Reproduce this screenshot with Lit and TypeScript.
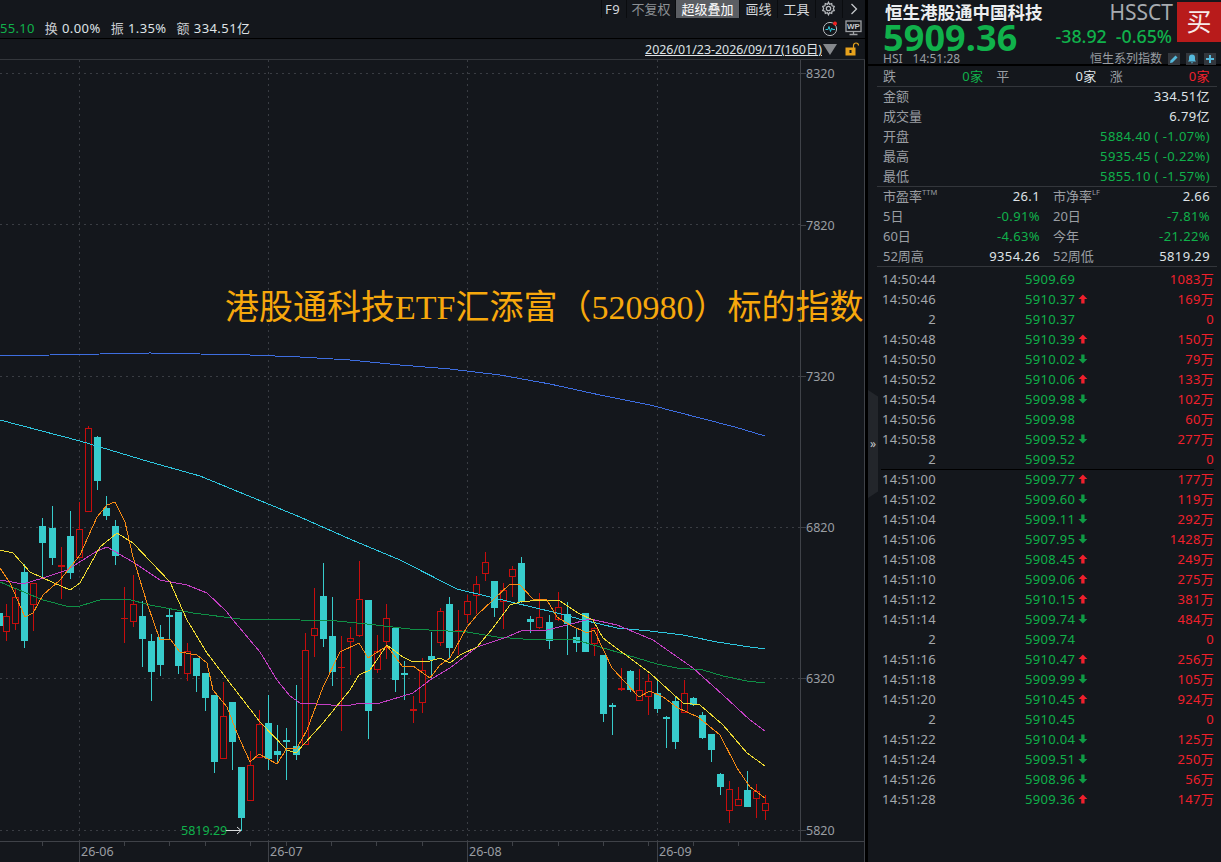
import { LitElement, html, css, svg } from "lit";
import { customElement } from "lit/decorators.js";

type C = [number, number, number, number, number, number];
// x, high, bodyTop, bodyBottom, low, rising(1)/falling(0)
const CANDLES: C[] = [
  [-1, 605, 613, 626, 640, 0], [6, 604, 616, 631, 641, 1], [15, 588, 597, 623, 630, 1], [24, 564, 572, 641, 648, 0],
  [33, 583, 583, 604, 631, 1], [42, 518, 526, 543, 577, 0], [52, 506, 528, 558, 565, 0], [61, 547, 565, 567, 599, 1],
  [70, 511, 536, 573, 579, 0], [79, 502, 529, 557, 557, 1], [88, 426, 428, 511, 511, 1], [97, 436, 437, 481, 490, 0],
  [106, 496, 508, 516, 520, 0], [115, 520, 526, 556, 565, 0], [124, 587, 618, 618, 643, 1], [133, 575, 604, 621, 627, 1],
  [142, 601, 616, 639, 667, 0], [151, 634, 641, 672, 701, 0], [160, 625, 637, 665, 676, 0], [169, 608, 615, 617, 639, 0],
  [178, 612, 612, 666, 674, 0], [187, 643, 651, 673, 681, 1], [196, 658, 658, 676, 692, 0], [205, 673, 673, 698, 711, 0],
  [214, 695, 695, 762, 773, 0], [223, 682, 716, 758, 758, 1], [232, 702, 702, 742, 770, 0], [241, 767, 767, 818, 831, 0],
  [250, 751, 765, 800, 800, 1], [259, 710, 724, 757, 758, 1], [268, 695, 723, 759, 770, 0], [277, 725, 751, 755, 762, 0],
  [286, 728, 740, 741, 780, 0], [296, 685, 746, 755, 760, 0], [305, 633, 650, 744, 744, 1], [314, 588, 628, 635, 657, 1],
  [323, 563, 596, 639, 647, 0], [332, 597, 636, 672, 686, 0], [341, 636, 667, 667, 731, 1], [350, 627, 638, 641, 675, 1],
  [359, 561, 599, 635, 637, 1], [368, 600, 600, 711, 739, 0], [377, 635, 651, 669, 673, 1], [386, 604, 618, 641, 659, 1],
  [395, 628, 628, 680, 692, 0], [404, 661, 673, 673, 700, 0], [413, 696, 709, 711, 723, 1], [422, 658, 670, 702, 713, 1],
  [431, 632, 656, 660, 680, 0], [440, 608, 611, 642, 646, 1], [449, 597, 604, 648, 658, 0], [458, 610, 630, 630, 655, 1],
  [467, 595, 601, 614, 623, 1], [476, 576, 584, 595, 614, 1], [485, 552, 562, 573, 581, 1], [494, 581, 581, 608, 617, 0],
  [503, 583, 590, 601, 629, 1], [512, 566, 569, 576, 597, 1], [521, 557, 563, 602, 603, 0], [530, 616, 619, 622, 633, 0],
  [539, 593, 617, 627, 629, 1], [549, 615, 622, 641, 649, 0], [558, 592, 607, 619, 621, 1], [567, 602, 614, 624, 655, 0],
  [576, 629, 637, 643, 652, 0], [585, 613, 613, 652, 652, 0], [594, 627, 628, 643, 656, 1], [603, 655, 655, 714, 722, 0],
  [612, 703, 705, 705, 735, 0], [621, 668, 688, 690, 691, 1], [630, 670, 671, 690, 692, 0], [639, 669, 690, 700, 700, 1],
  [648, 674, 681, 696, 715, 1], [657, 680, 693, 709, 713, 0], [666, 716, 717, 717, 748, 0], [675, 697, 701, 742, 749, 0],
  [684, 680, 693, 712, 712, 1], [693, 697, 698, 705, 706, 0], [702, 712, 715, 738, 739, 0], [711, 734, 734, 750, 762, 0],
  [720, 773, 774, 787, 795, 0], [729, 781, 789, 810, 823, 1], [738, 787, 799, 805, 805, 1], [747, 771, 790, 807, 807, 0],
  [756, 784, 791, 798, 818, 1], [765, 795, 803, 810, 820, 1],
];

const LINES: { c: string; p: string }[] = [
  { c: "#3e6ee0", p: "0,356 50,355 100,354 150,353 200,354 250,355 300,357 350,360 400,365 450,369 500,375 550,384 600,395 650,405 700,418 735,427 765,436" },
  { c: "#2ec6de", p: "0,420 80,441 150,462 200,476 300,517 352,540 400,560 457,589 490,597 557,613 583,620 617,628 650,631 683,635 717,642 750,647 765,649" },
  { c: "#0f8f45", p: "0,582 43,600 70,607 80,606 103,599 127,599 150,605 193,613 240,619 273,619 300,620 337,621 367,624 410,629 467,632 497,637 523,639 550,640 573,639 600,647 627,655 657,664 677,668 703,670 723,676 747,681 765,683" },
  { c: "#c43fc4", p: "0,580 23,584 43,578 67,570 97,551 107,547 133,562 160,580 187,585 207,593 227,612 233,620 260,652 277,680 290,696 300,703 347,706 360,703 380,703 413,693 430,680 450,668 477,647 507,637 523,630 543,631 567,625 590,619 617,625 653,640 693,668 723,695 750,720 765,731" },
  { c: "#f0dc32", p: "0,550 13,553 30,572 43,578 70,590 80,583 100,547 117,533 133,543 170,582 187,620 207,653 233,687 260,722 287,750 296,753 323,723 350,690 359,675 370,670 387,645 403,657 413,662 430,661 440,658 450,663 460,655 477,647 493,628 510,605 520,602 540,600 560,601 578,613 593,620 603,638 623,653 650,673 683,703 700,705 723,725 747,753 765,766" },
  { c: "#f58a14", p: "0,568 10,583 25,617 33,613 43,595 60,580 80,555 97,517 107,505 115,502 125,522 133,557 143,590 147,603 160,640 170,639 180,652 197,655 207,663 213,690 227,707 237,733 250,762 259,754 277,764 287,748 297,748 307,730 323,687 340,652 359,643 368,658 387,646 403,667 413,666 430,678 440,665 450,658 467,627 477,615 493,600 510,584 520,585 533,599 547,600 557,617 570,625 587,633 594,630 612,668 639,697 650,691 663,697 678,708 698,717 720,735 737,768 750,787 765,798" },
];

const H_GRID = [73, 224, 376, 527, 678, 830];
const V_GRID = [79, 268, 467, 657];
const PRICES: [string, number][] = [["8320", 73], ["7820", 225], ["7320", 376], ["6820", 527], ["6320", 678], ["5820", 830]];
const TICKS = [42, 124, 169, 205, 250, 286, 331, 376, 422, 512, 558, 603, 648, 693, 738];
const MONTHS: [string, number][] = [["26-06", 79], ["26-07", 268], ["26-08", 467], ["26-09", 657]];

type Row = [string, string, "" | "u" | "d", string];
const ROWS: Row[] = [
  ["14:50:44", "5909.69", "", "1083万"], ["14:50:46", "5910.37", "u", "169万"], ["2", "5910.37", "", "0"],
  ["14:50:48", "5910.39", "u", "150万"], ["14:50:50", "5910.02", "d", "79万"], ["14:50:52", "5910.06", "u", "133万"],
  ["14:50:54", "5909.98", "d", "102万"], ["14:50:56", "5909.98", "", "60万"], ["14:50:58", "5909.52", "d", "277万"],
  ["2", "5909.52", "", "0"],
  ["14:51:00", "5909.77", "u", "177万"], ["14:51:02", "5909.60", "d", "119万"], ["14:51:04", "5909.11", "d", "292万"],
  ["14:51:06", "5907.95", "d", "1428万"], ["14:51:08", "5908.45", "u", "249万"], ["14:51:10", "5909.06", "u", "275万"],
  ["14:51:12", "5910.15", "u", "381万"], ["14:51:14", "5909.74", "d", "484万"], ["2", "5909.74", "", "0"],
  ["14:51:16", "5910.47", "u", "256万"], ["14:51:18", "5909.99", "d", "105万"], ["14:51:20", "5910.45", "u", "924万"],
  ["2", "5910.45", "", "0"], ["14:51:22", "5910.04", "d", "125万"], ["14:51:24", "5909.51", "d", "250万"],
  ["14:51:26", "5908.96", "d", "56万"], ["14:51:28", "5909.36", "u", "147万"],
];

@customElement("app-root")
export class AppRoot extends LitElement {
  static styles = css`
    :host {
      display: flex;
      width: 1221px;
      height: 862px;
      overflow: hidden;
      background: #14171c;
      color: #dfe3e6;
      font-family: "Noto Sans", "Noto Sans CJK SC", sans-serif;
      font-size: 13px;
    }
    .left { width: 865px; flex: none; display: flex; flex-direction: column; }
    .bar { height: 18px; display: flex; justify-content: flex-end; align-items: center; }
    .tool { height: 18px; padding-bottom: 1px; display: flex; align-items: center; justify-content: center; color: #d5d8db; white-space: nowrap; border-left: 1px solid #0a0c0f; box-sizing: border-box; }
    .tool.f9 { width: 25px; padding-right: 3px; letter-spacing: 0.5px; }
    .tool.dim { color: #8b8f93; width: 49px; }
    .tool.on { background: #5b5e63; color: #fff; width: 64px; }
    .tool.w38 { width: 38px; }
    .tool.gear { width: 27px; padding-right: 1px; }
    .tool.chev { width: 23px; }
    .info { height: 20px; display: flex; justify-content: space-between; align-items: center; border-bottom: 1px solid #000; }
    .stats { display: flex; gap: 10px; white-space: nowrap; line-height: 20px; letter-spacing: 0.42px; }
    .stats .g { color: #10b14b; letter-spacing: 0.3px; }
    .stats b { font-weight: 400; color: #c9ccd0; }
    .badges { display: flex; gap: 6px; align-items: center; padding-right: 3px; }
    .range { height: 20px; display: flex; justify-content: flex-end; align-items: center; padding-right: 5px; border-bottom: 1px solid #34373c; }
    .range u { color: #dfe3e6; font-size: 12.4px; white-space: nowrap; }
    .tri { width: 0; height: 0; border-left: 7px solid transparent; border-right: 7px solid transparent; border-top: 11px solid #85888c; margin: 0 8px 0 1px; }
    .canvas { position: relative; flex: 1; min-height: 0; }
    .canvas svg { display: block; }
    .headline {
      position: absolute; left: 225px; top: 228px; white-space: nowrap; color: #f7a80c;
      font-family: "Liberation Serif", "Noto Sans CJK SC", serif; font-size: 34px; line-height: 40px;
    }
    .axis { font-family: "Noto Sans", "Noto Sans CJK SC", sans-serif; font-size: 12.5px; fill: #9a9ea3; }

    .right { flex: 1; display: flex; position: relative; border-left: 3px solid #000; background: #14171c; min-width: 0; }
    .handle {
      position: absolute; left: 0; top: 390px; width: 10px; height: 108px; background: #23262b; color: #c5c8cb;
      clip-path: polygon(0 0, 100% 6%, 100% 94%, 0 100%);
      display: flex; align-items: center; justify-content: center; font-size: 12px; line-height: 1;
    }
    .panel { flex: 1; display: flex; flex-direction: column; min-width: 0; }
    .quote { height: 64px; flex: none; padding-left: 15px; border-bottom: 2px solid #000; box-sizing: content-box; display: flex; flex-direction: column; }
    .qhead { display: flex; height: 51px; flex: none; }
    .qmain { flex: 1; display: flex; flex-direction: column; min-width: 0; }
    .qtop { display: flex; justify-content: space-between; align-items: center; height: 24px; padding-right: 4px; }
    .qname { font-size: 17.5px; font-weight: 700; color: #eceef0; line-height: 24px; white-space: nowrap; margin-left: 2px; }
    .qcode { font-size: 21px; color: #a7abb0; line-height: 29px; }
    .qmid { display: flex; justify-content: space-between; align-items: center; height: 27px; padding-right: 5px; }
    .qprice { font-size: 36px; font-weight: 700; color: #10b14b; line-height: 27px; letter-spacing: 0.1px; }
    .qchg { display: flex; gap: 9px; color: #10b14b; font-size: 17.8px; font-weight: 500; margin-top: -3px; white-space: nowrap; line-height: 25px; }
    .buy { flex: none; width: 44px; margin-top: 2px; height: 40px; background: #b81b1b; color: #f6e9e9; font-size: 25px; line-height: 38px; text-align: center; }
    .qfoot { display: flex; flex: none; justify-content: space-between; align-items: center; height: 13px; margin-top: 1px; padding-right: 5px; color: #9a9ea3; font-size: 12px; line-height: 13px; }
    .qfoot .ql { display: flex; gap: 10px; }
    .qfoot .qr { display: flex; align-items: center; gap: 6px; }
    .ibtn { width: 12px; height: 12px; background: #33373d; display: flex; align-items: center; justify-content: center; }

    .sec { border-bottom: 1px solid #33363b; padding: 0 7px 0 6px; margin-left: 9px; margin-right: 4px; }
    .sec.tight { margin-top: -1px; }
    .line { height: 20px; line-height: 20px; display: flex; justify-content: space-between; white-space: nowrap; }
    .lab { color: #9a9ea3; }
    .g { color: #10b14b; letter-spacing: 0.38px; }
    .rd { color: #f0202c; letter-spacing: 0.38px; }
    .w { color: #dfe3e6; letter-spacing: 0.38px; }
    .three { display: grid; grid-template-columns: repeat(3, 1fr); column-gap: 13px; height: 20px; }
    .two { display: grid; grid-template-columns: 1fr 1fr; column-gap: 13px; }
    sup { font-size: 7.5px; line-height: 0; vertical-align: 6px; }

    .trades { padding: 2px 7px 0 13px; letter-spacing: 0.3px; }
    .row { display: grid; grid-template-columns: 55px 89px 63px 1fr; height: 20px; line-height: 20px; white-space: nowrap; }
    .row.cut { background: linear-gradient(#000, #000) no-repeat 0 0 / 100% 1px; }
    .row .t { text-align: right; color: #a4a8ac; }
    .row .p { grid-column: 3; color: #10b14b; display: flex; align-items: center; gap: 3px; }
    .row .v { color: #f0202c; text-align: right; }
  `;

  private chart() {
    return svg`
      <svg width="865" height="802" viewBox="0 60 865 802">
        <g stroke="#3a3d43" stroke-dasharray="2 4" stroke-width="1" shape-rendering="crispEdges">
          ${H_GRID.map((y) => svg`<line x1="0" x2="800" y1=${y + 0.5} y2=${y + 0.5}></line>`)}
          ${V_GRID.map((x) => svg`<line y1="60" y2="841" x1=${x + 0.5} x2=${x + 0.5}></line>`)}
        </g>
        <g shape-rendering="crispEdges">
          ${CANDLES.map(([x, hi, top, bot, lo, up]) => {
            const col = up ? "#c70d0d" : "#37cccc";
            const flat = bot - top <= 2;
            return svg`
              <line x1=${x + 0.5} x2=${x + 0.5} y1=${hi} y2=${lo} stroke=${col}></line>
              ${up
                ? flat
                  ? svg`<rect x=${x - 3} y=${top} width="7" height=${Math.max(bot - top, 1)} fill=${col}></rect>`
                  : svg`<rect x=${x - 2.5} y=${top + 0.5} width="6" height=${bot - top} fill="#14171c" stroke=${col}></rect>`
                : svg`<rect x=${x - 3} y=${top} width="7" height=${Math.max(bot - top, flat ? 2 : 1)} fill=${col}></rect>`}
            `;
          })}
        </g>
        <g fill="none" stroke-width="1" shape-rendering="crispEdges">
          ${LINES.map((l) => svg`<polyline points=${l.p} stroke=${l.c}></polyline>`)}
        </g>
        <text x="181" y="835" class="axis" style="fill:#10b14b" font-size="12">5819.29</text>
        <path d="M226 830.5H241M237 827l4 3.500-4 3.500" fill="none" stroke="#d8dadc"></path>

        <g stroke="#3f4248" shape-rendering="crispEdges">
          <line x1="800.5" x2="800.5" y1="60" y2="841"></line>
          <line x1="0" x2="865" y1="841.5" y2="841.5"></line>
          <line x1="864.5" x2="864.5" y1="60" y2="862"></line>
          ${PRICES.map(([, y]) => svg`<line x1="801" x2="806" y1=${y + 0.5} y2=${y + 0.5}></line>`)}
          ${TICKS.map((x) => svg`<line x1=${x + 0.5} x2=${x + 0.5} y1="842" y2="846"></line>`)}
          ${MONTHS.map(([, x]) => svg`<line x1=${x + 0.5} x2=${x + 0.5} y1="842" y2="862"></line>`)}
        </g>
        ${PRICES.map(([t, y]) => svg`<text x="806" y=${y + 5} class="axis">${t}</text>`)}
        ${MONTHS.map(([t, x]) => svg`<text x=${x + 2} y="856" class="axis">${t}</text>`)}
      </svg>`;
  }

  private toolbar() {
    return html`
      <div class="bar">
        <span class="tool f9">F9</span>
        <span class="tool dim">不复权</span>
        <span class="tool on">超级叠加</span>
        <span class="tool w38">画线</span>
        <span class="tool w38">工具</span>
        <span class="tool gear">
          <svg width="15" height="15" viewBox="0 0 24 24" fill="none" stroke="#b9bcc0" stroke-width="2">
            <circle cx="12" cy="12" r="3.500"></circle>
            <path d="M12 2l1.600 3.200 3.500-1 .6 3.600 3.500 1-1.400 3.200 1.400 3.200-3.500 1-.6 3.600-3.500-1L12 22l-1.600-3.200-3.500 1-.6-3.600-3.500-1L4.200 12 2.800 8.800l3.500-1 .6-3.600 3.500 1z"></path>
          </svg>
        </span>
        <span class="tool chev">
          <svg width="8" height="12" viewBox="0 0 8 12" fill="none" stroke="#c5c8cb" stroke-width="1.300"><path d="M1.500 1l5 5-5 5"></path></svg>
        </span>
      </div>`;
  }

  private badges() {
    return html`
      <div class="badges">
        <svg width="17" height="17" viewBox="0 0 17 17" fill="none">
          <circle cx="8" cy="9" r="6.600" stroke="#b5b8bc"></circle>
          <path d="M3.500 9.500h2.500l1-3 1.500 5 1.200-3.500 .8 1.500h2.500" stroke="#2cc6d6"></path>
          <circle cx="13" cy="3.500" r="2" fill="#f02020"></circle>
        </svg>
        <svg width="17" height="16" viewBox="0 0 17 16" fill="none">
          <rect x="1" y="1" width="15" height="10.500" stroke="#9ea1a5" stroke-width="1.300"></rect>
          <path d="M8.500 11.500v2.500M4.500 14.500h8" stroke="#9ea1a5" stroke-width="1.300"></path>
          <text x="8.500" y="9.200" text-anchor="middle" font-size="8" font-weight="700" fill="#c5c8cb" font-family="Liberation Sans, sans-serif">WP</text>
        </svg>
      </div>`;
  }

  private arrow(dir: string) {
    if (dir === "u")
      return html`<svg width="10" height="10" viewBox="0 0 10 10"><path d="M5 0.500L9.500 5H6.700V9.500H3.300V5H0.500z" fill="#f0202c"></path></svg>`;
    if (dir === "d")
      return html`<svg width="10" height="10" viewBox="0 0 10 10"><path d="M5 9.500L9.500 5H6.700V0.500H3.300V5H0.500z" fill="#0f9a44"></path></svg>`;
    return "";
  }

  render() {
    return html`
      <div class="left">
        ${this.toolbar()}
        <div class="info">
          <div class="stats">
            <span class="g">55.10</span>
            <span><b>换</b> 0.00%</span>
            <span><b>振</b> 1.35%</span>
            <span><b>额</b> 334.51亿</span>
          </div>
          ${this.badges()}
        </div>
        <div class="range">
          <u>2026/01/23-2026/09/17(160日)</u>
          <span class="tri"></span>
          <svg width="15" height="14" viewBox="0 0 15 14" fill="none">
            <path d="M8.500 6V3.500a2.500 2.500 0 015 0" stroke="#e7a21c" stroke-width="1.200"></path>
            <rect x="0.500" y="5.500" width="10" height="8" fill="#e7a21c"></rect>
            <rect x="4.500" y="8" width="2" height="3" fill="#14171c"></rect>
          </svg>
        </div>
        <div class="canvas">
          ${this.chart()}
          <div class="headline">港股通科技ETF汇添富（520980）标的指数</div>
        </div>
      </div>

      <div class="right">
        <div class="handle">»</div>
        <div class="panel">
          <div class="quote">
            <div class="qhead">
              <div class="qmain">
                <div class="qtop">
                  <span class="qname">恒生港股通中国科技</span>
                  <span class="qcode">HSSCT</span>
                </div>
                <div class="qmid">
                  <span class="qprice">5909.36</span>
                  <span class="qchg"><span>-38.92</span><span>-0.65%</span></span>
                </div>
              </div>
              <div class="buy">买</div>
            </div>
            <div class="qfoot">
              <span class="ql"><span>HSI</span><span>14:51:28</span></span>
              <span class="qr">
                <span>恒生系列指数</span>
                <span class="ibtn"><svg width="10" height="10" viewBox="0 0 10 10"><path d="M1 9l.5-2.500L6.500 1.500l2 2-5 5z" fill="#55b9dc"></path></svg></span>
                <span class="ibtn"><svg width="10" height="10" viewBox="0 0 10 10"><path d="M5 .500a3 3 0 013 3V6l1 1.500H1L2 6V3.500a3 3 0 013-3zM4 8.200h2L5 9.700z" fill="#55b9dc"></path></svg></span>
                <span class="ibtn"><svg width="10" height="10" viewBox="0 0 10 10"><path d="M4 1h2v3h3v2H6v3H4V6H1V4h3z" fill="#55b9dc"></path></svg></span>
              </span>
            </div>
          </div>

          <div class="sec">
            <div class="three">
              <div class="line"><span class="lab">跌</span><span class="g">0家</span></div>
              <div class="line"><span class="lab">平</span><span class="w">0家</span></div>
              <div class="line"><span class="lab">涨</span><span class="rd">0家</span></div>
            </div>
          </div>
          <div class="sec tight">
            <div class="line"><span class="lab">金额</span><span class="w">334.51亿</span></div>
            <div class="line"><span class="lab">成交量</span><span class="w">6.79亿</span></div>
            <div class="line"><span class="lab">开盘</span><span class="g">5884.40 ( -1.07%)</span></div>
            <div class="line"><span class="lab">最高</span><span class="g">5935.45 ( -0.22%)</span></div>
            <div class="line"><span class="lab">最低</span><span class="g">5855.10 ( -1.57%)</span></div>
          </div>
          <div class="sec tight">
            <div class="two">
              <div class="line"><span class="lab">市盈率<sup>TTM</sup></span><span class="w">26.1</span></div>
              <div class="line"><span class="lab">市净率<sup>LF</sup></span><span class="w">2.66</span></div>
              <div class="line"><span class="lab">5日</span><span class="g">-0.91%</span></div>
              <div class="line"><span class="lab">20日</span><span class="g">-7.81%</span></div>
              <div class="line"><span class="lab">60日</span><span class="g">-4.63%</span></div>
              <div class="line"><span class="lab">今年</span><span class="g">-21.22%</span></div>
              <div class="line"><span class="lab">52周高</span><span class="w">9354.26</span></div>
              <div class="line"><span class="lab">52周低</span><span class="w">5819.29</span></div>
            </div>
          </div>

          <div class="trades">
            ${ROWS.map(
              (r, i) => html`
                <div class="row ${i === 10 ? "cut" : ""}">
                  <span class="t">${r[0]}</span>
                  <span class="p"><span>${r[1]}</span>${this.arrow(r[2])}</span>
                  <span class="v">${r[3]}</span>
                </div>`
            )}
          </div>
        </div>
      </div>
    `;
  }
}
